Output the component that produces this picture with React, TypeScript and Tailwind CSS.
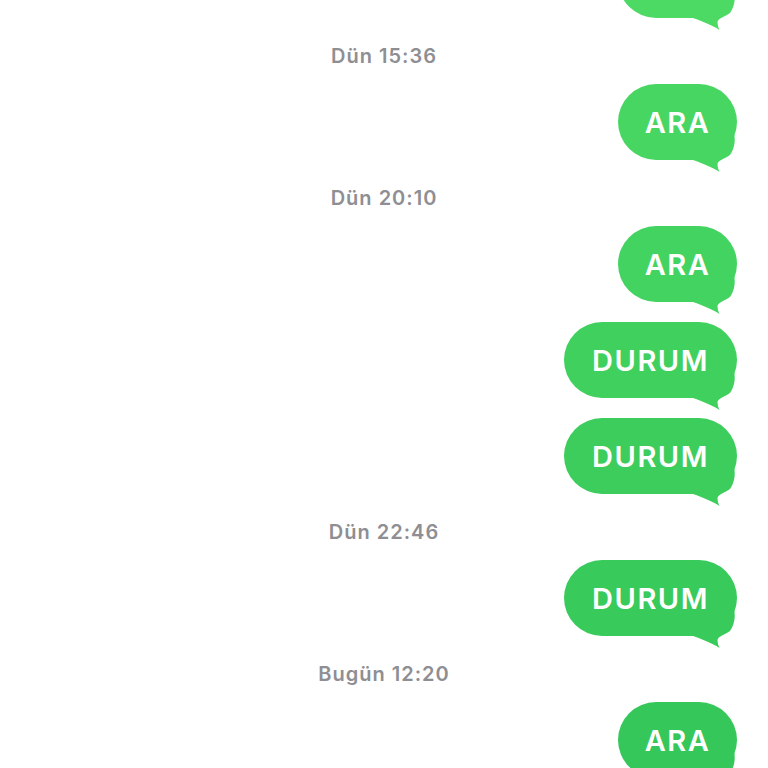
type Item =
  | { kind: "time"; text: string }
  | { kind: "msg"; text: string; color: string; gap?: boolean }

const items: Item[] = [
  { kind: "msg", text: "ARA", color: "#4cd964" },
  { kind: "time", text: "Dün 15:36" },
  { kind: "msg", text: "ARA", color: "#48d662" },
  { kind: "time", text: "Dün 20:10" },
  { kind: "msg", text: "ARA", color: "#43d360" },
  { kind: "msg", text: "DURUM", color: "#40d05e", gap: true },
  { kind: "msg", text: "DURUM", color: "#3ccd5d", gap: true },
  { kind: "time", text: "Dün 22:46" },
  { kind: "msg", text: "DURUM", color: "#38ca5b" },
  { kind: "time", text: "Bugün 12:20" },
  { kind: "msg", text: "ARA", color: "#35c759" },
]

function Bubble({ text, color }: { text: string; color: string }) {
  const wide = text.length > 3
  return (
    <div
      className={`relative h-[76px] rounded-full flex items-center justify-center ${wide ? "w-[173px]" : "w-[119px]"}`}
      style={{ backgroundColor: color }}
    >
      <span className="text-white text-[29px] font-semibold tracking-[1.5px] font-['Inter',sans-serif] leading-none">
        {text}
      </span>
      {/* tail */}
      <svg
        className="absolute right-0 -bottom-[12px] overflow-visible"
        width="48"
        height="30"
        viewBox="0 0 48 30"
      >
        <path
          d="M45 -8 C46.5 -3 46 6 41 13 C36 17 29 18 28.5 22 C28.5 25 29.5 28 30.5 30 C24 25.5 14 21.5 4 18 L0 0 L30 -10 Z"
          fill={color}
        />
      </svg>
    </div>
  )
}

export default function App() {
  return (
    <div className="w-[768px] h-[768px] overflow-hidden bg-white">
      <div className="flex flex-col items-end pr-[31px] -mt-[58px]">
        {items.map((item, i) =>
          item.kind === "time" ? (
            <div
              key={i}
              className="self-stretch pl-[31px] mt-[26px] mb-[16px] h-[24px] flex items-center justify-center text-[#8e8e93] text-[20px] font-semibold tracking-[1px] font-['Inter',sans-serif]"
            >
              {item.text}
            </div>
          ) : (
            <div key={i} className={item.gap ? "mt-[20px]" : ""}>
              <Bubble text={item.text} color={item.color} />
            </div>
          )
        )}
      </div>
    </div>
  )
}
